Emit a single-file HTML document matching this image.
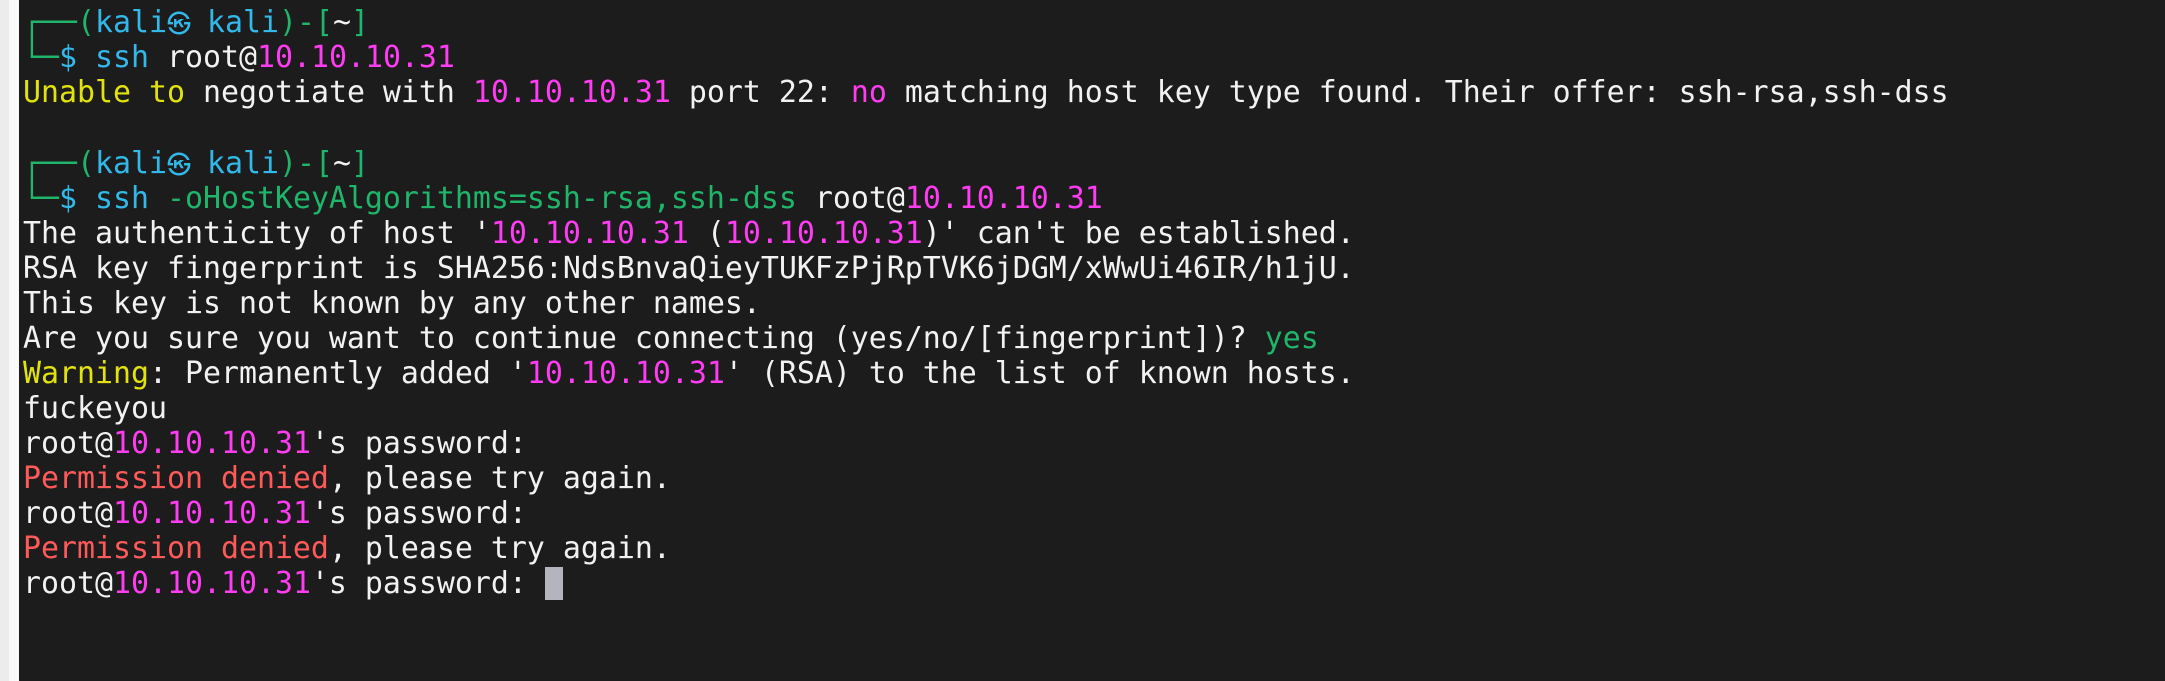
<!DOCTYPE html>
<html><head><meta charset="utf-8"><style>
html,body{margin:0;padding:0;}
body{width:2165px;height:681px;overflow:hidden;background:#1c1c1c;position:relative;}
.strip{position:absolute;left:0;top:0;width:9px;height:681px;background:#ececec;}
.strip2{position:absolute;left:9px;top:0;width:10px;height:681px;background:#fafafa;}
pre{position:absolute;left:23px;top:-31px;margin:0;font-family:"DejaVu Sans Mono","Liberation Mono","Noto Sans CJK JP",monospace;font-size:29.9px;line-height:35px;color:#f2f2f2;white-space:pre;}
.g{color:#1fb56a}.b{color:#33b8ea}.m{color:#ff3cf2}.y{color:#e2e20f}.r{color:#ff5a5a}
.k{display:inline-block;width:40px;font-family:"Noto Sans CJK JP",sans-serif;font-size:24px;color:#33b8ea}
.cur{display:inline-block;width:18px;height:33px;background:#b4b4bf;vertical-align:-7px;}
</style></head><body>
<div class="strip"></div><div class="strip2"></div>
<pre>

<span class="g">┌──(</span><span class="b">kali</span><span class="k">㉿</span><span class="b">kali</span><span class="g">)-[</span>~<span class="g">]</span>
<span class="g">└─</span><span class="b">$ ssh</span> root@<span class="m">10.10.10.31</span>
<span class="y">Unable</span> <span class="y">to</span> negotiate with <span class="m">10.10.10.31</span> port 22: <span class="m">no</span> matching host key type found. Their offer: ssh-rsa,ssh-dss

<span class="g">┌──(</span><span class="b">kali</span><span class="k">㉿</span><span class="b">kali</span><span class="g">)-[</span>~<span class="g">]</span>
<span class="g">└─</span><span class="b">$ ssh</span> <span class="g">-oHostKeyAlgorithms=ssh-rsa,ssh-dss</span> root@<span class="m">10.10.10.31</span>
The authenticity of host '<span class="m">10.10.10.31</span> (<span class="m">10.10.10.31</span>)' can't be established.
RSA key fingerprint is SHA256:NdsBnvaQieyTUKFzPjRpTVK6jDGM/xWwUi46IR/h1jU.
This key is not known by any other names.
Are you sure you want to continue connecting (yes/no/[fingerprint])? <span class="g">yes</span>
<span class="y">Warning</span>: Permanently added '<span class="m">10.10.10.31</span>' (RSA) to the list of known hosts.
fuckeyou
root@<span class="m">10.10.10.31</span>'s password:
<span class="r">Permission denied</span>, please try again.
root@<span class="m">10.10.10.31</span>'s password:
<span class="r">Permission denied</span>, please try again.
root@<span class="m">10.10.10.31</span>'s password: <span class="cur"></span>
</pre>
</body></html>
